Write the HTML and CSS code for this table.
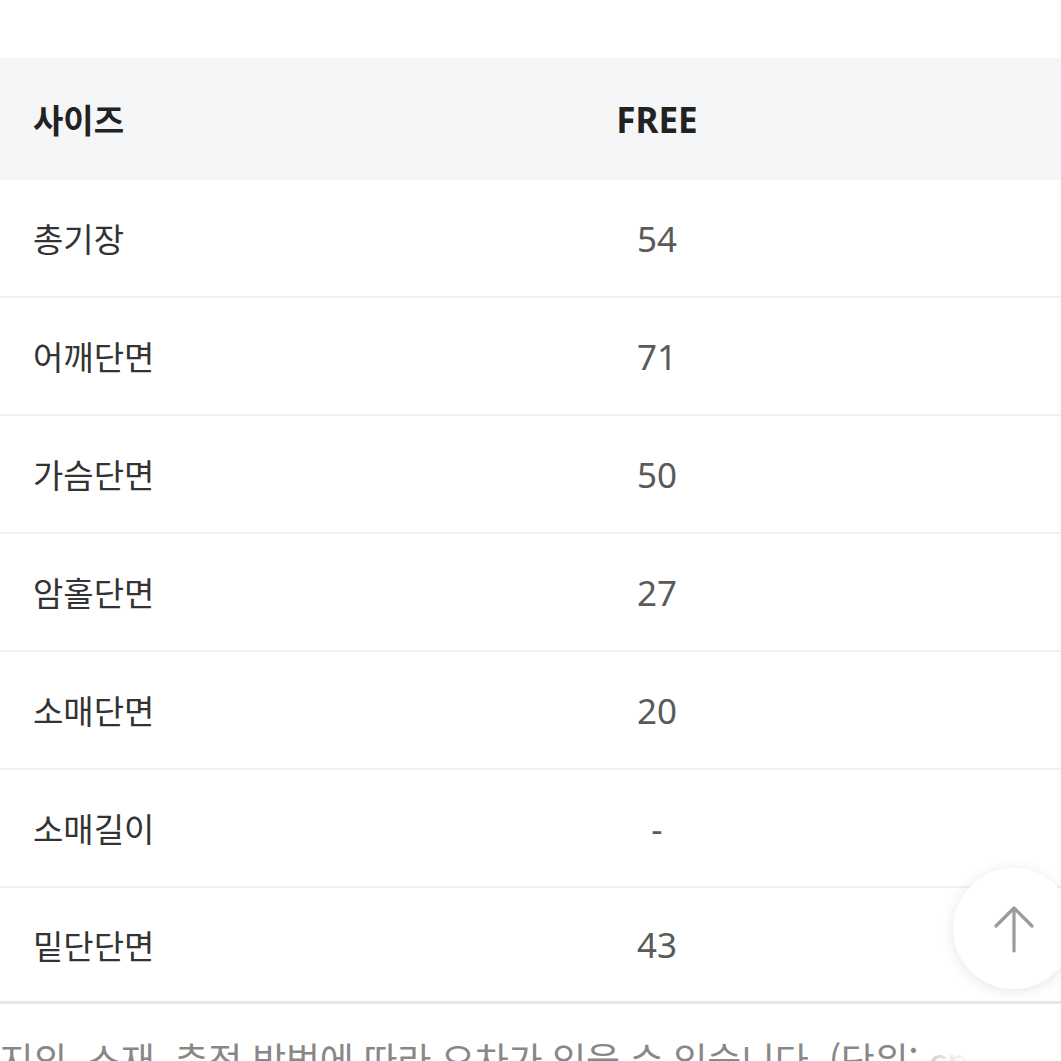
FILE: index.html
```html
<!DOCTYPE html>
<html lang="ko">
<head>
<meta charset="utf-8">
<link rel="stylesheet" href="styles.css">
</head>
<body>
<div class="page">
  <div class="size-table">
    <div class="row head">
      <div class="label">사이즈</div>
      <div class="value">FREE</div>
    </div>
    <div class="row">
      <div class="label">총기장</div>
      <div class="value">54</div>
    </div>
    <div class="row">
      <div class="label">어깨단면</div>
      <div class="value">71</div>
    </div>
    <div class="row">
      <div class="label">가슴단면</div>
      <div class="value">50</div>
    </div>
    <div class="row">
      <div class="label">암홀단면</div>
      <div class="value">27</div>
    </div>
    <div class="row">
      <div class="label">소매단면</div>
      <div class="value">20</div>
    </div>
    <div class="row">
      <div class="label">소매길이</div>
      <div class="value">-</div>
    </div>
    <div class="row last">
      <div class="label">밑단단면</div>
      <div class="value">43</div>
    </div>
  </div>
  <p class="note">이미지의, 소재, 측정 방법에 따라 오차가 있을 수 있습니다. (단위: cm)</p>
</div>
<div class="corner-fade"></div>
<button class="top-btn" aria-label="맨 위로">
  <svg width="44" height="50" viewBox="0 0 44 50" fill="none" stroke="#9a9a9a" stroke-width="3.2" stroke-linecap="round" stroke-linejoin="round">
    <path d="M22 47 V5"/>
    <path d="M4 22 L22 4 L40 22"/>
  </svg>
</button>
</body>
</html>
```
FILE: styles.css
```css
html, body {
  margin: 0;
  padding: 0;
  background: #ffffff;
  overflow: hidden;
}
body {
  font-family: "Noto Sans CJK KR", "Noto Sans", sans-serif;
  width: 1061px;
  height: 1061px;
  position: relative;
}
.page {
  padding-top: 58px;
}
.size-table {
  display: flex;
  flex-direction: column;
}
.row {
  display: grid;
  grid-template-columns: 253px 1fr;
  align-items: center;
  height: 116px;
  border-bottom: 2px solid #f0f0f0;
}
.row.head {
  height: 122px;
  background: #f4f6f8;
  border-bottom: none;
}
.row.last {
  height: 113px;
  border-bottom: 3px solid #e6e6e6;
}
.label {
  padding-left: 33px;
  font-size: 33px;
  color: #333333;
}
.value {
  text-align: center;
  font-family: "Noto Sans", "Noto Sans CJK KR", sans-serif;
  font-size: 35px;
  color: #5a5a5a;
}
.head .label {
  font-weight: 700;
  color: #222222;
}
.head .value {
  font-weight: 700;
  color: #222222;
  font-size: 35px;
}
.note {
  margin: 28px 0 0 -68px;
  white-space: nowrap;
  font-size: 37px;
  color: #888888;
  letter-spacing: -0.3px;
}
.corner-fade {
  position: absolute;
  left: 930px;
  right: 0;
  bottom: 0;
  height: 45px;
  background: linear-gradient(to right, rgba(255,255,255,0.6), #ffffff 30%);
}
.top-btn {
  position: absolute;
  left: 953px;
  top: 868px;
  width: 121px;
  height: 121px;
  border-radius: 50%;
  border: none;
  background: #ffffff;
  box-shadow: 0 2px 14px rgba(0, 0, 0, 0.10);
  display: flex;
  align-items: center;
  justify-content: center;
  padding: 0;
}
```
